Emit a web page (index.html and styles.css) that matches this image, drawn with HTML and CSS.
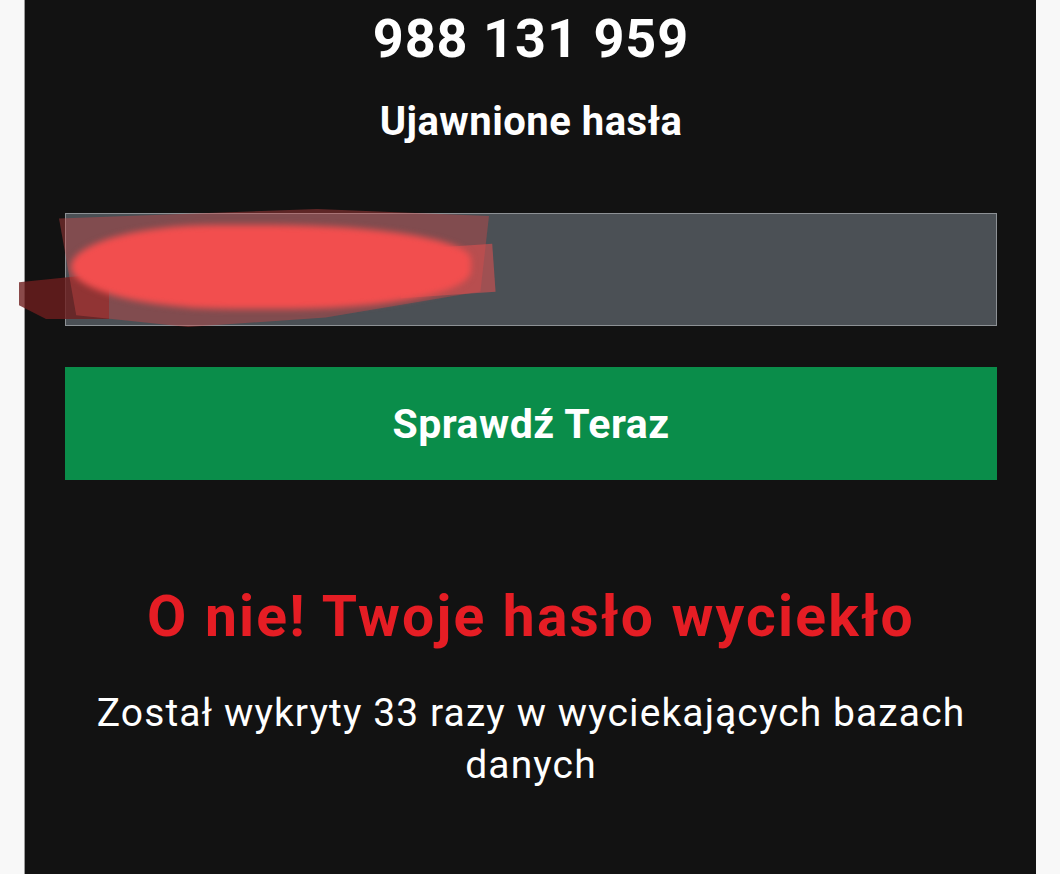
FILE: index.html
```html
<!DOCTYPE html>
<html lang="pl">
<head>
    <meta charset="UTF-8">
    <meta name="viewport" content="width=device-width, initial-scale=1.0">
    <title>Ujawnione hasła</title>
    <link rel="stylesheet" href="styles.css">
</head>
<body>
    <div class="panel">
        <h1 class="count">988 131 959</h1>
        <h2 class="subtitle">Ujawnione hasła</h2>

        <div class="field">
            <input class="password" type="text" value="" aria-label="Hasło">
            <!-- redaction scribble -->
            <div class="scribble">
                <span class="smear smear-back"></span>
                <span class="smear smear-mid"></span>
                <span class="smear smear-tail"></span>
                <span class="smear smear-core"></span>
            </div>
        </div>

        <button class="check-btn">Sprawdź Teraz</button>

        <h3 class="result-title">O nie! Twoje hasło wyciekło</h3>
        <p class="result-text">Został wykryty 33 razy w wyciekających bazach danych</p>
    </div>
</body>
</html>
```

FILE: styles.css
```css
/* Page */
body {
    margin: 0;
    background: #f8f8f8;
    font-family: Roboto, 'Liberation Sans', sans-serif;
}

.panel {
    width: 1011px;
    margin-left: 25px;
    min-height: 874px;
    box-sizing: border-box;
    padding: 7px 39px 0 40px;
    background: #121212;
    color: #fff;
    text-align: center;
    display: flex;
    flex-direction: column;
    box-shadow: -1px 0 0 #9a9a9a;
}

/* Headings */
.count {
    margin: 0;
    font-size: 54px;
    line-height: 64px;
    font-weight: 700;
    letter-spacing: 1px;
}

.subtitle {
    margin: 27px 0 0;
    font-size: 40px;
    line-height: 48px;
    font-weight: 700;
    letter-spacing: 0.5px;
}

/* Input */
.field {
    position: relative;
    margin-top: 67px;
}

.password {
    display: block;
    width: 100%;
    height: 113px;
    box-sizing: border-box;
    margin: 0;
    border: 1.5px solid #8d9195;
    background: #4b5055;
    outline: none;
}

.scribble {
    position: absolute;
    left: -46px;
    top: -6px;
    width: 480px;
    height: 125px;
    pointer-events: none;
}

.smear {
    position: absolute;
    display: block;
}

.smear-back {
    left: 0;
    top: 66px;
    width: 90px;
    height: 46px;
    background: rgba(110, 30, 30, 0.8);
    clip-path: polygon(0 20%, 100% 0, 100% 100%, 30% 100%, 0 70%);
}

.smear-mid {
    left: 40px;
    top: 2px;
    width: 430px;
    height: 118px;
    background: rgba(210, 70, 70, 0.4);
    clip-path: polygon(0 8%, 60% 0, 100% 6%, 98% 70%, 62% 92%, 30% 100%, 4% 90%);
}

.smear-tail {
    left: 380px;
    top: 40px;
    width: 95px;
    height: 48px;
    background: rgba(230, 80, 80, 0.55);
    transform: rotate(-4deg);
}

.smear-core {
    left: 52px;
    top: 18px;
    width: 400px;
    height: 84px;
    border-radius: 40% 55% 50% 45% / 55% 45% 50% 55%;
    background: #f24e4e;
    filter: blur(3px);
}

/* Button */
.check-btn {
    margin-top: 41px;
    height: 113px;
    border: none;
    background: #0a8d4a;
    color: #fff;
    font-family: inherit;
    font-size: 41px;
    font-weight: 700;
    letter-spacing: 0.5px;
}

/* Result */
.result-title {
    margin: 103px 0 0;
    font-size: 57px;
    line-height: 68px;
    font-weight: 700;
    letter-spacing: 2.2px;
    color: #e51d24;
}

.result-text {
    margin: 36px 0 0;
    font-size: 39px;
    line-height: 52px;
    letter-spacing: 1.1px;
    padding: 0 30px;
}
```
